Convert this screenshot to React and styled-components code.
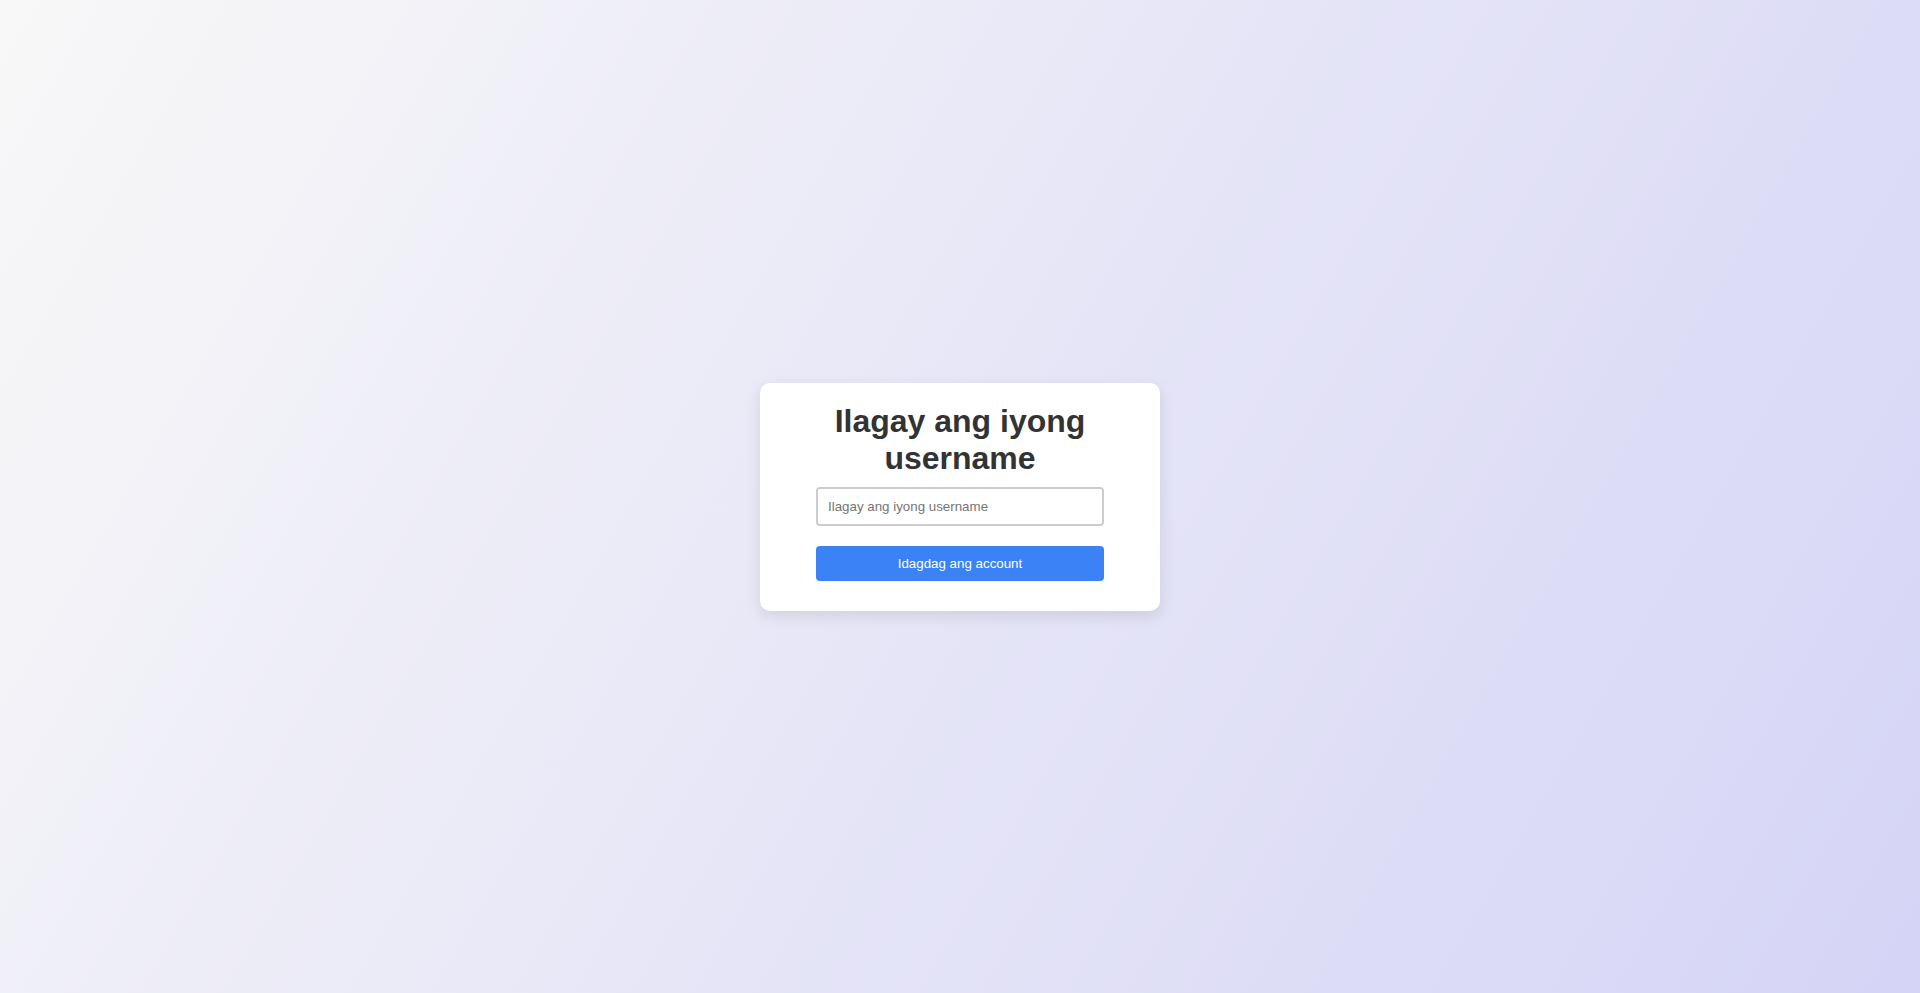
import React, { useState } from 'react'
import styled, { createGlobalStyle } from 'styled-components'

const GlobalStyle = createGlobalStyle`
  html, body, #root {
    margin: 0;
    padding: 0;
    height: 100%;
  }
  body {
    font-family: "Liberation Sans", Arial, sans-serif;
  }
`;

const App = () => {
  const [username, setUsername] = useState('');

  return (
    <Page>
      <GlobalStyle />
      <Card>
        <Title>Ilagay ang iyong username</Title>
        <Input
          type="text"
          placeholder="Ilagay ang iyong username"
          value={username}
          onChange={e => setUsername(e.target.value)}
        />
        <Button>Idagdag ang account</Button>
      </Card>
    </Page>
  )
}

export default App

const Page = styled.div`
  min-height: 100vh;
  display: flex;
  align-items: center;
  justify-content: center;
  background: linear-gradient(120deg, #f8f8f8 0%, #d5d4f6 100%);
`;

const Card = styled.div`
  width: 400px;
  box-sizing: border-box;
  padding: 20px 20px 30px;
  background: #fff;
  border-radius: 10px;
  box-shadow: 0 5px 15px rgba(0, 0, 0, 0.1);
  display: flex;
  flex-direction: column;
  align-items: center;
`;

const Title = styled.h2`
  margin: 0 0 10px;
  font-size: 32px;
  font-weight: 700;
  color: #333;
  text-align: center;
`;

const Input = styled.input`
  width: 80%;
  box-sizing: border-box;
  padding: 10px;
  margin-bottom: 20px;
  border: 2px solid #ccc;
  border-radius: 4px;
  font-family: "Liberation Sans", Arial, sans-serif;
  font-size: 13.333px;
  color: #333;
  outline: none;

  &::placeholder {
    color: #757575;
  }
`;

const Button = styled.button`
  width: 80%;
  box-sizing: border-box;
  padding: 10px;
  border: none;
  border-radius: 4px;
  background: #3b82f6;
  color: #fff;
  font-family: "Liberation Sans", Arial, sans-serif;
  font-size: 13.333px;
  cursor: pointer;
`;
